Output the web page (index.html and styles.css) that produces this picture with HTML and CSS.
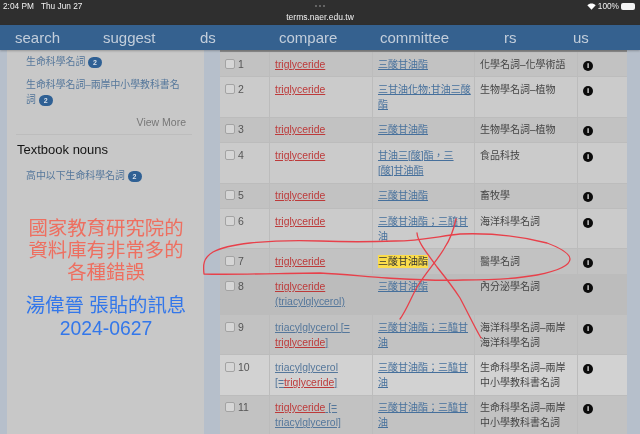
FILE: index.html
```html
<!DOCTYPE html>
<html lang="zh-Hant">
<head>
<meta charset="utf-8">
<title>terms.naer.edu.tw</title>
<link rel="stylesheet" href="styles.css">
</head>
<body>
<div class="screen">
  <header class="status">
    <div class="status-left"><span>2:04 PM</span><span>Thu Jun 27</span></div>
    <div class="status-center"><div class="dots"><i></i><i></i><i></i></div><div class="url">terms.naer.edu.tw</div></div>
    <div class="status-right">
      <svg class="wifi" width="9" height="7" viewBox="0 0 10 8"><path d="M5 7.6 0.2 2.6C2.9 0 7.1 0 9.8 2.6Z" fill="#fff"/></svg>
      <span>100%</span>
      <span class="battery"></span>
    </div>
  </header>
  <nav class="nav">
    <span>search</span><span>suggest</span><span>ds</span><span>compare</span><span>committee</span><span>rs</span><span>us</span>
  </nav>
  <main class="main">
    <aside class="side">
      <a class="side-link first">生命科學名詞 <b class="badge">2</b></a>
      <a class="side-link">生命科學名詞–兩岸中小學教科書名<br>詞 <b class="badge">2</b></a>
      <div class="more">View More</div>
      <h2 class="side-title">Textbook nouns</h2>
      <a class="side-link">高中以下生命科學名詞 <b class="badge">2</b></a>
      <div class="note red">國家教育研究院的<br>資料庫有非常多的<br>各種錯誤</div>
      <div class="note blue">湯偉晉 張貼的訊息<br>2024-0627</div>
    </aside>
    <section class="content">
      <table class="terms">
        <colgroup><col class="c1"><col class="c2"><col class="c3"><col class="c4"><col class="c5"></colgroup>
        <tbody>
          <tr class="odd"><td><span class="chk"></span>1</td><td><a class="hit">triglyceride</a></td><td><a class="zh">三酸甘油酯</a></td><td>化學名詞–化學術語</td><td><span class="info">i</span></td></tr>
          <tr><td><span class="chk"></span>2</td><td><a class="hit">triglyceride</a></td><td><a class="zh">三甘油化物;甘油三酸<br>酯</a></td><td>生物學名詞–植物</td><td><span class="info">i</span></td></tr>
          <tr class="odd"><td><span class="chk"></span>3</td><td><a class="hit">triglyceride</a></td><td><a class="zh">三酸甘油酯</a></td><td>生物學名詞–植物</td><td><span class="info">i</span></td></tr>
          <tr><td><span class="chk"></span>4</td><td><a class="hit">triglyceride</a></td><td><a class="zh">甘油三[酸]酯，三<br>[酸]甘油酯</a></td><td>食品科技</td><td><span class="info">i</span></td></tr>
          <tr class="odd"><td><span class="chk"></span>5</td><td><a class="hit">triglyceride</a></td><td><a class="zh">三酸甘油酯</a></td><td>畜牧學</td><td><span class="info">i</span></td></tr>
          <tr><td><span class="chk"></span>6</td><td><a class="hit">triglyceride</a></td><td><a class="zh">三酸甘油酯；三醯甘<br>油</a></td><td>海洋科學名詞</td><td><span class="info">i</span></td></tr>
          <tr class="odd"><td><span class="chk"></span>7</td><td><a class="hit">triglyceride</a></td><td><mark class="mark">三酸甘油酯</mark></td><td>醫學名詞</td><td><span class="info">i</span></td></tr>
          <tr class="dark"><td><span class="chk"></span>8</td><td><a class="hit">triglyceride</a><br><a class="en">(triacylglycerol)</a></td><td><a class="zh">三酸甘油酯</a></td><td>內分泌學名詞</td><td><span class="info">i</span></td></tr>
          <tr class="odd"><td><span class="chk"></span>9</td><td><a class="en">triacylglycerol [=</a><br><a class="hit">triglyceride</a><a class="en">]</a></td><td><a class="zh">三酸甘油酯；三醯甘<br>油</a></td><td>海洋科學名詞–兩岸<br>海洋科學名詞</td><td><span class="info">i</span></td></tr>
          <tr class="light"><td><span class="chk"></span>10</td><td><a class="en">triacylglycerol</a><br><a class="en">[=</a><a class="hit">triglyceride</a><a class="en">]</a></td><td><a class="zh">三酸甘油酯；三醯甘<br>油</a></td><td>生命科學名詞–兩岸<br>中小學教科書名詞</td><td><span class="info">i</span></td></tr>
          <tr class="odd"><td><span class="chk"></span>11</td><td><a class="hit">triglyceride</a><a class="en"> [=</a><br><a class="en">triacylglycerol]</a></td><td><a class="zh">三酸甘油酯；三醯甘<br>油</a></td><td>生命科學名詞–兩岸<br>中小學教科書名詞</td><td><span class="info">i</span></td></tr>
        </tbody>
      </table>
    </section>
  </main>
  <svg class="ink" width="640" height="434" viewBox="0 0 640 434" fill="none">
    <path d="M204 274C203 265 203 258 213 252C222 247 233 245 250 243C270 241 295 240 320 241C345 242 370 242 395 241C420 241 440 236 460 234C487 233 520 236 547 243C560 248 570 253 570 259C570 267 552 272 537 275C515 279 490 280 463 280C430 281 405 279 387 278C360 276 340 274 320 273C290 273 235 275 204 274Z"/>
    <path d="M456 219C454 228 451 238 445 247C440 257 427 271 417 287C411 298 406 311 400 319"/>
    <path d="M417 233C418 243 428 254 437 267C445 277 453 287 460 298C467 311 474 326 481 338"/>
  </svg>
</div>
</body>
</html>
```
FILE: styles.css
```css
* { box-sizing: border-box; }
html, body { margin: 0; padding: 0; }
body {
  font-family: "Liberation Sans", "Noto Sans CJK TC", sans-serif;
  font-size: 10px;
  line-height: 15px;
  color: #3c3c3c;
}
.screen {
  position: relative;
  width: 640px;
  height: 434px;
  overflow: hidden;
  background: #b6bfcb;
  display: flex;
  flex-direction: column;
  filter: blur(.3px);
}
.status {
  position: relative;
  height: 25px;
  flex: none;
  background: #2f2f2f;
  color: #f2f2f2;
  font-size: 8.3px;
  display: flex;
  justify-content: space-between;
  padding: 0 5px 0 3px;
}
.status-left { display: flex; gap: 7px; line-height: 13px; }
.status-center {
  position: absolute;
  left: 270px;
  width: 100px;
  top: 0;
  text-align: center;
}
.dots { display: flex; justify-content: center; gap: 2px; height: 11px; padding-top: 5px; }
.dots i { width: 2px; height: 2px; border-radius: 50%; background: #777; }
.url { font-size: 8.5px; line-height: 12px; }
.status-right { display: flex; align-items: flex-start; gap: 2px; line-height: 12px; }
.wifi { margin-top: 3px; }
.battery {
  width: 14px;
  height: 7px;
  margin-top: 3px;
  border-radius: 2px;
  background: #f4f4f4;
  display: block;
}
.nav {
  height: 25px;
  flex: none;
  background: #35618f;
  color: #c3cedb;
  font-size: 15px;
  line-height: 25px;
  display: grid;
  grid-template-columns: 88px 97px 79px 101px 124px 69px auto;
  padding-left: 15px;
  box-shadow: 0 1px 2px rgba(0, 0, 0, .25);
  position: relative;
  z-index: 1;
}
.main {
  flex: 1;
  min-height: 0;
  display: flex;
  padding-left: 7px;
  gap: 16px;
}
.side {
  width: 197px;
  flex: none;
  background: #c8c8c8;
  padding: 4px 12px 0 9px;
}
.side-link {
  display: block;
  color: #55779b;
  font-size: 9.9px;
  line-height: 15px;
  padding-left: 10px;
  margin-bottom: 8px;
}
.badge {
  display: inline-block;
  width: 14px;
  height: 11px;
  border-radius: 6px;
  background: #2f6094;
  color: #d8e0ea;
  font-size: 7px;
  line-height: 11px;
  text-align: center;
  margin-left: 0;
}
.more {
  text-align: right;
  color: #777;
  font-size: 10.5px;
  line-height: 14px;
  padding-right: 6px;
  padding-bottom: 5px;
  border-bottom: 1px solid #bdbdbd;
}
.side-title {
  margin: 6px 0 9px 1px;
  font-size: 13px;
  line-height: 18px;
  font-weight: 400;
  color: #141414;
}
.note { text-align: center; font-size: 19.4px; line-height: 22px; margin-left: 4px; }
.red { color: #ee6f60; margin-top: 34px; }
.blue { color: #3377ea; margin-top: 11px; line-height: 23px; }
.content { width: 407px; flex: none; overflow: hidden; border-top: 2px solid #8f8f8f; }
.terms {
  width: 407px;
  table-layout: fixed;
  border-collapse: separate;
  border-spacing: 0;
  background: #cbcbcb;
}
.c1 { width: 49px; }
.c2 { width: 103px; }
.c3 { width: 102px; }
.c4 { width: 103px; }
.c5 { width: 50px; }
.terms td {
  padding: 4.7px 2px 4.7px 5px;
  vertical-align: top;
  border-left: 1px solid #bcbcbc;
  border-bottom: 1px solid #bcbcbc;
  color: #454545;
  line-height: 15px;
  overflow: hidden;
}
.terms td:first-child { border-left: 0; color: #555; padding-right: 0; white-space: nowrap; font-size: 10.5px; }
.odd { background: #c2c2c2; }
.dark { background: #bcbcbc; }
.light { background: #d2d2d2; }
.chk {
  display: inline-block;
  width: 10px;
  height: 10px;
  border: 1px solid #a3a3a3;
  border-radius: 2px;
  background: #d6d6d6;
  vertical-align: -1px;
  margin-right: 3px;
}
.hit { color: #bd3a3a; text-decoration: underline; font-size: 10.4px; }
.en { color: #55779b; text-decoration: underline; font-size: 10.4px; }
.zh { color: #46709c; text-decoration: underline; }
.mark { background: #fbdc4b; color: #333; padding: 1px 0; }
.info {
  display: inline-block;
  width: 10px;
  height: 10px;
  border-radius: 50%;
  background: #0c0c0c;
  color: #eee;
  font-size: 8px;
  font-weight: 700;
  line-height: 10px;
  text-align: center;
}
.ink { position: absolute; left: 0; top: 0; pointer-events: none; z-index: 2; }
.ink path { stroke: #e8404a; stroke-width: 1.3; stroke-linecap: round; stroke-linejoin: round; }
```
